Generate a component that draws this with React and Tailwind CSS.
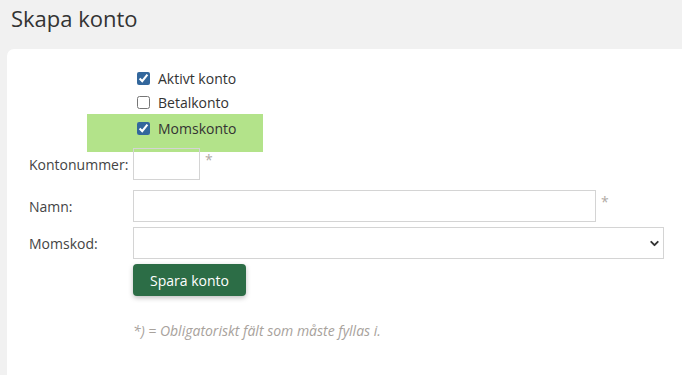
import { ChevronDown } from "lucide-react";

const font = { fontFamily: '"Open Sans", "Liberation Sans", sans-serif' };

function Check({ label, checked }) {
  return (
    <label className="flex h-6 items-center gap-2 text-[14px] text-[#333]">
      <input
        type="checkbox"
        defaultChecked={checked}
        className="m-0 h-[13px] w-[13px] accent-[#33679c]"
      />
      {label}
    </label>
  );
}

function Row({ label, children, className = "" }) {
  return (
    <div className={`flex items-center ${className}`}>
      <div className="w-[104px] shrink-0 text-[14px] text-[#444]">{label}</div>
      {children}
    </div>
  );
}

function Star() {
  return <span className="ml-[5px] self-start pt-[5px] text-[14px] leading-none text-[#b0aaa4]">*</span>;
}

export default function App() {
  return (
    <main className="min-h-[375px] overflow-hidden bg-[#f1f1f1] pl-[7px]" style={font}>
      <h1 className="px-[4px] pt-[2px] text-[22px] leading-[32px] text-[#333]">Skapa konto</h1>

      <section className="mt-[15px] min-h-[330px] rounded-tl-[7px] bg-white pl-[22px] pt-[17px]">
        <div className="ml-[108px]">
          <Check label="Aktivt konto" checked />
          <Check label="Betalkonto" />
        </div>
        <div className="ml-[58px] w-[176px] bg-[#b3e38a] pb-[12px] pl-[50px] pt-[2px]">
          <Check label="Momskonto" checked />
        </div>

        <Row label="Kontonummer:" className="-mt-[4px]">
          <input className="h-[32px] w-[67px] border border-[#d4d4d4] bg-transparent outline-none" />
          <Star />
        </Row>

        <Row label="Namn:" className="mt-[10px]">
          <input className="h-[32px] w-[463px] border border-[#d4d4d4] outline-none" />
          <Star />
        </Row>

        <Row label="Momskod:" className="mt-[5px]">
          <div className="relative">
            <select className="h-[32px] w-[531px] appearance-none border border-[#d4d4d4] bg-white outline-none">
              <option></option>
            </select>
            <ChevronDown
              className="pointer-events-none absolute right-[3px] top-[10px] h-[13px] w-[13px] text-[#333]"
              strokeWidth={3.5}
            />
          </div>
        </Row>

        <div className="ml-[104px] mt-[5px]">
          <button className="h-[32px] w-[113px] rounded-[4px] bg-[#2c6d46] text-[14px] text-white shadow-[0_2px_5px_rgba(0,0,0,0.25)]">
            Spara konto
          </button>
        </div>

        <p className="ml-[104px] mt-[24px] text-[14px] italic text-[#a8a29c]">
          *) = Obligatoriskt fält som måste fyllas i.
        </p>
      </section>
    </main>
  );
}
